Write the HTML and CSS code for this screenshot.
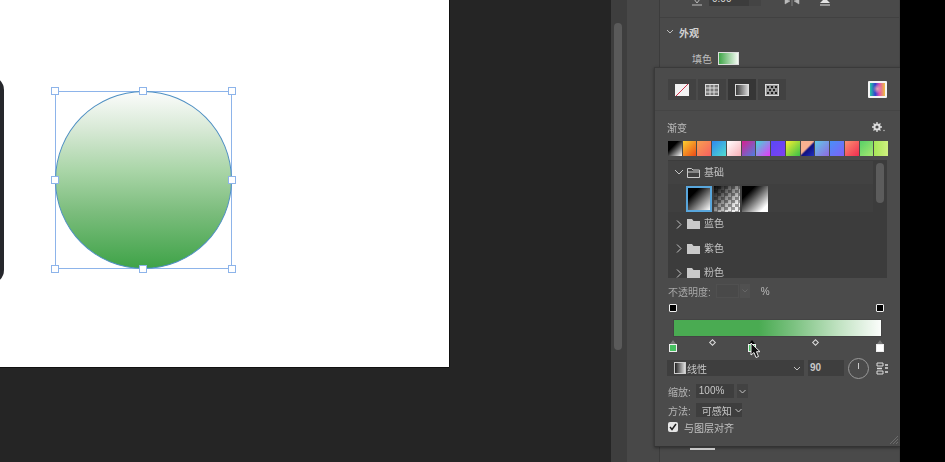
FILE: index.html
```html
<!DOCTYPE html>
<html lang="zh">
<head>
    <meta charset="UTF-8">
    <meta name="viewport" content="width=device-width, initial-scale=1.0">
    <title>渐变面板</title>
    <link rel="stylesheet" href="styles.css">
</head>
<body>
    <div class="screen">
        <div class="canvas">
            <div class="artboard"></div>
            <div class="device"></div>
            <div class="selection">
                <div class="circle"></div>
                <i class="handle h-tl"></i><i class="handle h-tc"></i><i class="handle h-tr"></i>
                <i class="handle h-ml"></i><i class="handle h-mr"></i>
                <i class="handle h-bl"></i><i class="handle h-bc"></i><i class="handle h-br"></i>
            </div>
        </div>

        <div class="scroll-strip"><div class="scroll-thumb"></div></div>
        <div class="side-gutter"></div>

        <div class="props">
            <div class="props-top">
                <svg class="top-icon" width="12" height="8" viewBox="0 0 12 8"><path d="M1 7h10M3 1l3 4 3-4" fill="none" stroke="#bbb"/></svg>
                <div class="top-field"><span>0.00</span><b></b></div>
                <svg class="top-flip" width="16" height="8" viewBox="0 0 16 8"><path d="M8 0v8M1 1l5 2-5 3zM15 1l-5 2 5 3z" fill="#bbb" stroke="#bbb" stroke-width=".5"/></svg>
                <svg class="top-tri" width="12" height="8" viewBox="0 0 12 8"><path d="M6 0l5 5H1z" fill="#e2e2e2"/><path d="M1 7h10" stroke="#e2e2e2"/></svg>
            </div>
            <div class="section-title">
                <svg width="8" height="6" viewBox="0 0 8 6"><path d="M1 1l3 3 3-3" fill="none" stroke="#bdbdbd"/></svg>
                外观
            </div>
            <div class="fill-row">填色 <span class="fill-swatch"></span></div>
        </div>

        <div class="popover">
            <div class="tabs">
                <div class="tab">
                    <svg width="14" height="12" viewBox="0 0 14 12"><rect width="14" height="12" fill="#f2f2f2"/><path d="M1 12L13 0" stroke="#d0304a"/></svg>
                </div>
                <div class="tab">
                    <svg width="14" height="12" viewBox="0 0 14 12"><rect x=".5" y=".5" width="13" height="11" fill="#777" stroke="#ddd"/><path d="M5 0v12M9 0v12M0 4h14M0 8h14" stroke="#ddd"/></svg>
                </div>
                <div class="tab tab-on">
                    <svg width="14" height="12" viewBox="0 0 14 12"><defs><linearGradient id="tabGrad"><stop offset="0" stop-color="#333"/><stop offset="1" stop-color="#ddd"/></linearGradient></defs><rect x=".5" y=".5" width="13" height="11" fill="url(#tabGrad)" stroke="#ddd"/></svg>
                </div>
                <div class="tab">
                    <svg width="14" height="12" viewBox="0 0 14 12"><rect x=".5" y=".5" width="13" height="11" fill="#999" stroke="#ddd"/><path d="M2 3h2M6 3h2M10 3h2M4 6h2M8 6h2M2 9h2M6 9h2M10 9h2" stroke="#222" stroke-width="2"/></svg>
                </div>
                <div class="spectrum"></div>
            </div>

            <div class="gradient-head">
                <span>渐变</span>
                <svg width="13" height="10" viewBox="0 0 13 10"><circle cx="5" cy="5" r="2.6" fill="none" stroke="#ddd" stroke-width="2"/><path d="M5 0v2M5 8v2M0 5h2M8 5h2M1.5 1.5l1.4 1.4M7.1 7.1l1.4 1.4M1.5 8.5l1.4-1.4M7.1 2.9l1.4-1.4" stroke="#ddd" stroke-width="1.3"/><circle cx="12" cy="8.500" r=".7" fill="#ccc"/></svg>
            </div>

            <div class="swatches">
                <i class="sw sw1"></i><i class="sw sw2"></i><i class="sw sw3"></i><i class="sw sw4"></i><i class="sw sw5"></i>
                <i class="sw sw6"></i><i class="sw sw7"></i><i class="sw sw8"></i><i class="sw sw9"></i><i class="sw sw10"></i>
                <i class="sw sw11"></i><i class="sw sw12"></i><i class="sw sw13"></i><i class="sw sw14"></i><i class="sw sw15"></i>
            </div>

            <div class="tree">
                <div class="tree-thumb"></div>
                <div class="tree-row tree-open">
                    <svg class="chev" width="10" height="7" viewBox="0 0 10 7"><path d="M1 1l4 4 4-4" fill="none" stroke="#c4c4c4"/></svg>
                    <svg class="folder" width="13" height="10" viewBox="0 0 13 10"><path d="M.5 9.500V.5h4l1.500 1.500h6.500v7.500z" fill="none" stroke="#ccc"/><path d="M.5 4h12" stroke="#ccc"/></svg>
                    基础
                </div>
                <div class="thumbs">
                    <div class="thumb thumb-a"></div>
                    <div class="thumb thumb-b"></div>
                    <div class="thumb thumb-c"></div>
                </div>
                <div class="tree-row">
                    <svg class="chev" width="10" height="9" viewBox="0 0 10 9"><path d="M3 .5l4 4-4 4" fill="none" stroke="#c4c4c4"/></svg>
                    <svg class="folder" width="13" height="10" viewBox="0 0 13 10"><path d="M0 10V0h5l1.500 2H13v8z" fill="#c9c9c9"/></svg>
                    蓝色
                </div>
                <div class="tree-row">
                    <svg class="chev" width="10" height="9" viewBox="0 0 10 9"><path d="M3 .5l4 4-4 4" fill="none" stroke="#c4c4c4"/></svg>
                    <svg class="folder" width="13" height="10" viewBox="0 0 13 10"><path d="M0 10V0h5l1.500 2H13v8z" fill="#c9c9c9"/></svg>
                    紫色
                </div>
                <div class="tree-row">
                    <svg class="chev" width="10" height="9" viewBox="0 0 10 9"><path d="M3 .5l4 4-4 4" fill="none" stroke="#c4c4c4"/></svg>
                    <svg class="folder" width="13" height="10" viewBox="0 0 13 10"><path d="M0 10V0h5l1.500 2H13v8z" fill="#c9c9c9"/></svg>
                    粉色
                </div>
            </div>

            <div class="opacity-row">
                <span>不透明度:</span>
                <div class="opacity-input"></div>
                <div class="opacity-drop"><svg width="6" height="4" viewBox="0 0 6 4"><path d="M.5.5L3 3 5.500.5" fill="none" stroke="#666"/></svg></div>
                <span class="percent">%</span>
            </div>

            <div class="ramp">
                <div class="stop-top stop-top-l"></div>
                <div class="stop-top stop-top-r"></div>
                <div class="ramp-bar"></div>
                <i class="mid mid-a"></i>
                <i class="mid mid-b"></i>
                <div class="stop stop-l"><b></b></div>
                <div class="stop stop-m"><b></b></div>
                <div class="stop stop-r"><b></b></div>
                <svg class="cursor" width="12" height="17" viewBox="0 0 12 17"><path d="M1 1v12l3-2.500 2 5 2.500-1-2-4.800H10z" fill="#111" stroke="#eee"/></svg>
            </div>

            <div class="type-row">
                <div class="type-select">
                    <span class="type-preview"></span>
                    <span>线性</span>
                    <svg class="type-chev" width="8" height="5" viewBox="0 0 8 5"><path d="M1 1l3 3 3-3" fill="none" stroke="#c4c4c4"/></svg>
                </div>
                <div class="angle-input">90</div>
                <div class="dial"><i></i></div>
                <svg class="flip" width="12" height="13" viewBox="0 0 12 13"><path d="M1 1h6v3H1zM1 9h6v3H1z" fill="none" stroke="#ddd"/><path d="M9 3h3M9 6h3M1 6.500h5M9 10h3" stroke="#ddd" stroke-width="1.500"/></svg>
            </div>

            <div class="scale-row">
                <span>缩放:</span>
                <div class="scale-input">100%</div>
                <div class="scale-drop"><svg width="7" height="5" viewBox="0 0 7 5"><path d="M.5 1l3 3 3-3" fill="none" stroke="#c4c4c4"/></svg></div>
            </div>

            <div class="method-row">
                <span>方法:</span>
                <div class="method-select">可感知 <svg width="7" height="5" viewBox="0 0 7 5"><path d="M.5 1l3 3 3-3" fill="none" stroke="#c4c4c4"/></svg></div>
            </div>

            <div class="align-row">
                <div class="check"><svg width="8" height="8" viewBox="0 0 8 8"><path d="M1 4l2 2.500L7 1" fill="none" stroke="#222" stroke-width="1.500"/></svg></div>
                <span>与图层对齐</span>
            </div>

            <svg class="grip" width="10" height="10" viewBox="0 0 10 10"><path d="M1 9l8-8M4 9l5-5M7 9l2-2" stroke="#6c6c6c"/></svg>
        </div>

        <div class="bottom-mark"></div>
        <div class="black-edge"></div>
    </div>
</body>
</html>
```

FILE: styles.css
```css
* { box-sizing: border-box; }
html, body { margin: 0; height: 100%; background: #000; overflow: hidden; }
body { font-family: "Liberation Sans", "Noto Sans CJK SC", sans-serif; font-size: 10px; color: #c6c6c6; }

/* the reference is a video frame, so everything is a little soft */
.screen { position: relative; display: flex; width: 945px; height: 462px; overflow: hidden; filter: blur(.45px); }

/* canvas */
.canvas { position: relative; width: 611px; height: 100%; background: #252525; }
.artboard { position: absolute; left: 0; top: 0; width: 449px; height: 367px; background: #fff; box-shadow: 0 1px 0 #111, 1px 0 0 #111; }
.device { position: absolute; left: -30px; top: 76px; width: 34px; height: 208px; background: #26272c; border-radius: 0 14px 14px 0; }
.selection { position: absolute; left: 55px; top: 91px; width: 177px; height: 178px; border: 1px solid #8db4ea; }
.circle { position: absolute; left: -1px; top: -1px; width: 177px; height: 178px; border-radius: 50%; border: 1px solid #4e8fc2; background: linear-gradient(180deg, #fbfcfb 0%, #d6e8d4 22%, #a9d5a7 45%, #7cbd7d 68%, #3fa348 100%); }
.handle { position: absolute; width: 8px; height: 8px; background: #fff; border: 1px solid #8db4ea; }
.h-tl { left: -5px; top: -5px; }
.h-tc { left: 83px; top: -5px; }
.h-tr { right: -5px; top: -5px; }
.h-ml { left: -5px; top: 84px; }
.h-mr { right: -5px; top: 84px; }
.h-bl { left: -5px; bottom: -5px; }
.h-bc { left: 83px; bottom: -5px; }
.h-br { right: -5px; bottom: -5px; }

/* panel behind the popover */
.scroll-strip { position: relative; width: 16px; height: 100%; background: #3e3e3e; }
.scroll-thumb { position: absolute; left: 3px; top: 23px; width: 8px; height: 327px; background: #5a5a5a; border-radius: 4px; }
.side-gutter { width: 33px; height: 100%; background: #484848; border-right: 1px solid #3c3c3c; }
.props { width: 240px; height: 100%; background: #4a4a4a; border-right: 1px solid #444; }
.props-top { display: flex; align-items: flex-start; height: 26px; margin-top: -8px; padding-left: 31px; border-bottom: 1px solid #414141; }
.top-icon { margin: 6px 6px 0 0; }
.top-field { display: flex; width: 52px; height: 14px; background: #3c3c3c; line-height: 14px; padding-left: 3px; color: #ddd; }
.top-field span { flex: 1; }
.top-field b { width: 12px; background: #444; }
.top-flip { margin: 6px 0 0 23px; }
.top-tri { margin: 6px 0 0 19px; }
.section-title { display: flex; align-items: center; gap: 5px; margin-top: 6px; padding-left: 6px; height: 16px; font-weight: bold; color: #d2d2d2; }
.fill-row { display: flex; align-items: center; gap: 6px; margin-top: 12px; padding-left: 32px; height: 13px; color: #bdbdbd; }
.fill-swatch { width: 21px; height: 13px; border: 1px solid #ddd; background: linear-gradient(90deg, #3fa648, #f4faf3); }

.black-edge { flex: 1; background: #000; }
.bottom-mark { position: absolute; left: 690px; top: 448px; width: 25px; height: 2px; background: #c8c8c8; }

/* gradient popover */
.popover { position: absolute; left: 654px; top: 67px; width: 246px; height: 380px; background: #4b4b4b; border-top: 1px solid #3a3a3a; border-left: 1px solid #3a3a3a; border-bottom: 1px solid #333; box-shadow: 0 1px 3px rgba(0,0,0,.4); }

.tabs { display: flex; align-items: center; gap: 2px; height: 43px; padding: 1px 13px 0 13px; border-bottom: 1px solid #454545; }
.tab { display: flex; align-items: center; justify-content: center; width: 28px; height: 21px; background: #424242; }
.tab-on { background: #363636; }
.spectrum { width: 19px; height: 17px; margin-left: auto; border: 2px solid #f4f4f4; border-radius: 1px; background: radial-gradient(circle at 50% 45%, #e8a0b0 0%, rgba(232,160,176,0) 45%), linear-gradient(90deg, #28c8a0 0%, #3040d0 35%, #e050b0 62%, #f0c040 100%); }

.gradient-head { display: flex; justify-content: space-between; align-items: center; height: 14px; margin-top: 9px; padding: 0 15px 0 12px; color: #bcbcbc; }

.swatches { display: flex; gap: 1px; height: 15px; margin: 7px 0 0 13px; width: 220px; }
.sw { flex: 1; min-width: 0; }
.sw1 { background: linear-gradient(135deg, #000 35%, #fff 100%); }
.sw2 { background: linear-gradient(135deg, #fbd030, #ee4a18); }
.sw3 { background: linear-gradient(135deg, #f8a050, #f86060); }
.sw4 { background: linear-gradient(135deg, #2f88f0, #50dcd0); }
.sw5 { background: linear-gradient(135deg, #fff, #f8b0b8); }
.sw6 { background: linear-gradient(135deg, #d82090, #4c80e0); }
.sw7 { background: linear-gradient(135deg, #40d8d8, #e838f8); }
.sw8 { background: linear-gradient(135deg, #5848f8, #8040f0); }
.sw9 { background: linear-gradient(135deg, #f8f030, #38c048); }
.sw10 { background: linear-gradient(135deg, #f8b090 45%, #101080 55%, #2030c0); }
.sw11 { background: linear-gradient(135deg, #60c8e8, #9068e0); }
.sw12 { background: linear-gradient(135deg, #4890f8, #8060f8); }
.sw13 { background: linear-gradient(135deg, #f89070, #f02c50); }
.sw14 { background: linear-gradient(135deg, #58d068, #a8e870); }
.sw15 { background: linear-gradient(90deg, #a8e858, #d0f080); }

.tree { position: relative; height: 118px; margin: 4px 13px 0 13px; background: #3c3c3c; color: #c2c2c2; overflow: hidden; }
.tree-thumb { position: absolute; right: 3px; top: 3px; width: 8px; height: 40px; background: #5c5c5c; border-radius: 4px; }
.tree-row { display: flex; align-items: center; height: 24.5px; padding-left: 6px; line-height: 12px; }
.tree-open { height: 23px; margin: 1px 14px 0 0; background: #424242; }
.chev { margin-right: 3px; }
.folder { margin-right: 4px; }
.thumbs { display: flex; gap: 2px; height: 28px; padding: 2px 0 0 18px; margin-right: 14px; background: #3f3f3f; }
.thumb { width: 26px; height: 26px; }
.thumb-a { background: linear-gradient(135deg, #000 25%, #8a8a8a 65%, #fff 100%); border: 2px solid #58a6dc; }
.thumb-b { background: linear-gradient(135deg, #000 0%, rgba(0,0,0,0) 80%), repeating-conic-gradient(#999 0 25%, #eee 0 50%) 0 0 / 7px 7px; }
.thumb-c { background: linear-gradient(135deg, #000 25%, #fff 85%); }

.opacity-row { display: flex; align-items: center; height: 16px; margin-top: 5px; padding-left: 13px; color: #a8a8a8; }
.opacity-input { width: 23px; height: 14px; margin-left: 5px; background: #494949; border: 1px solid #505050; }
.opacity-drop { display: flex; align-items: center; justify-content: center; width: 10px; height: 14px; margin-left: 1px; background: #505050; }
.percent { margin-left: 11px; color: #bbb; }

.ramp { position: relative; height: 56px; margin: 5px 18px 0 18px; }
.ramp-bar { position: absolute; left: 0; right: 0; top: 15px; height: 18px; border: 1px solid #444; background: linear-gradient(90deg, #4aab52 0%, #4aab52 41%, #7cc281 58%, #c2e3c3 80%, #fbfdfb 100%); }
.stop-top { position: absolute; top: 0; width: 8px; height: 8px; background: #000; border: 1.5px solid #eee; border-radius: 1px; }
.stop-top-l { left: -4px; }
.stop-top-r { right: -2px; }
.mid { position: absolute; top: 36px; width: 5px; height: 5px; background: #4b4b4b; border: 1px solid #ddd; transform: rotate(45deg); }
.mid-a { left: 37px; }
.mid-b { left: 140px; }
.stop { position: absolute; top: 40px; width: 8px; height: 8px; border: 1px solid #eee; }
.stop::before { content: ""; position: absolute; left: 0; top: -5px; border: 3px solid transparent; border-top: 0; border-bottom: 4px solid #777; }
.stop b { display: block; width: 100%; height: 100%; background: #46c060; }
.stop-l { left: -4px; }
.stop-m { left: 75px; }
.stop-m::before { border-bottom-color: #000; }
.stop-r { right: -2px; }
.stop-r b { background: #fff; }
.cursor { position: absolute; left: 77px; top: 38px; }

.type-row { display: flex; align-items: center; height: 16px; padding-left: 12px; }
.type-select { display: flex; align-items: center; gap: 1px; width: 137px; height: 16px; padding: 0 3px 0 7px; background: #3e3e3e; color: #c8c8c8; }
.type-preview { width: 12px; height: 12px; border: 1px solid #ccc; background: linear-gradient(90deg, #222, #ddd); }
.type-chev { margin-left: auto; }
.angle-input { width: 36px; height: 16px; margin-left: 4px; padding-left: 2px; background: #3e3e3e; line-height: 16px; color: #c8c8c8; font-weight: bold; }
.dial { position: relative; flex: none; width: 21px; height: 21px; margin-left: 4px; border: 1px solid #9a9a9a; border-radius: 50%; }
.dial i { position: absolute; left: 9px; top: 4px; width: 1px; height: 6px; background: #ccc; }
.flip { margin-left: 7px; }

.scale-row { display: flex; align-items: center; height: 16px; margin-top: 7px; padding-left: 13px; color: #b4b4b4; }
.scale-input { width: 38px; height: 14px; margin-left: 5px; padding-left: 3px; background: #3e3e3e; line-height: 14px; color: #c8c8c8; }
.scale-drop { display: flex; align-items: center; justify-content: center; width: 11px; height: 14px; margin-left: 3px; background: #424242; }

.method-row { display: flex; align-items: center; height: 16px; margin-top: 3px; padding-left: 13px; color: #b4b4b4; }
.method-select { display: flex; align-items: center; gap: 3px; width: 46px; height: 14px; margin-left: 5px; padding-left: 6px; background: #3e3e3e; color: #c4c4c4; }

.align-row { display: flex; align-items: center; gap: 6px; height: 14px; margin-top: 2px; padding-left: 13px; color: #c0c0c0; }
.check { display: flex; align-items: center; justify-content: center; width: 10px; height: 10px; background: #e6e6e6; border-radius: 2px; }

.grip { position: absolute; right: 1px; bottom: 1px; }
```
